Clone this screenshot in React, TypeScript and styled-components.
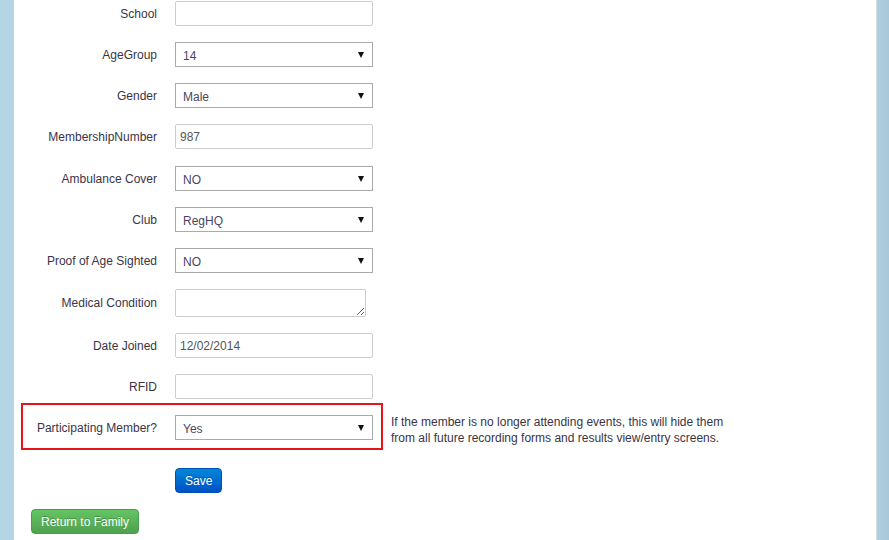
import styled, { createGlobalStyle } from "styled-components";

const GlobalStyle = createGlobalStyle`
  html, body {
    margin: 0;
    padding: 0;
    background: #b4d5e4;
  }
  body {
    font-family: Arial, "Liberation Sans", Helvetica, sans-serif;
    font-size: 12px;
    color: #333;
  }
  * { box-sizing: border-box; }
`;

type Field = {
  label: string;
  kind: "text" | "select" | "textarea";
  value?: string;
  gap?: number;
};

const fields: Field[] = [
  { label: "School", kind: "text" },
  { label: "AgeGroup", kind: "select", value: "14" },
  { label: "Gender", kind: "select", value: "Male" },
  { label: "MembershipNumber", kind: "text", value: "987", gap: 17 },
  { label: "Ambulance Cover", kind: "select", value: "NO" },
  { label: "Club", kind: "select", value: "RegHQ" },
  { label: "Proof of Age Sighted", kind: "select", value: "NO" },
  { label: "Medical Condition", kind: "textarea" },
  { label: "Date Joined", kind: "text", value: "12/02/2014" },
  { label: "RFID", kind: "text" },
];

const Control = ({ field }: { field: Field }) => {
  if (field.kind === "select") {
    return (
      <SelectWrap>
        <Select defaultValue={field.value}>
          <option>{field.value}</option>
        </Select>
      </SelectWrap>
    );
  }
  if (field.kind === "textarea") return <TextArea />;
  return <TextInput defaultValue={field.value ?? ""} />;
};

const App = () => {
  return (
    <>
      <GlobalStyle />
      <Page>
        <Panel>
          {fields.map((f) => (
            <Row key={f.label} $labelWidth={143} $gap={f.gap ?? 16}>
              <Label>{f.label}</Label>
              <Control field={f} />
            </Row>
          ))}

          <HighlightLine>
            <Highlight>
              <Row $labelWidth={134} $gap={0}>
                <Label>Participating Member?</Label>
                <Control field={{ label: "p", kind: "select", value: "Yes" }} />
              </Row>
            </Highlight>
            <Help>
              If the member is no longer attending events, this will hide them
              <br />
              from all future recording forms and results view/entry screens.
            </Help>
          </HighlightLine>

          <Actions>
            <Button $variant="primary">Save</Button>
          </Actions>
          <Footer>
            <Button $variant="success">Return to Family</Button>
          </Footer>
        </Panel>
        <RightEdge />
      </Page>
    </>
  );
};

const Page = styled.div`
  display: flex;
  min-height: 540px;
  padding-left: 14px;
  background: #b4d5e4;
`;

const Panel = styled.div`
  flex: 1;
  background: #fff;
  padding-top: 1px;
  min-height: 540px;
`;

const RightEdge = styled.div`
  width: 13px;
  border-left: 1px solid #d6dde0;
  background: linear-gradient(to right, #b0d0df, #a6c8d9);
`;

const Row = styled.div<{ $labelWidth: number; $gap: number }>`
  display: grid;
  grid-template-columns: ${(p) => p.$labelWidth}px 198px;
  column-gap: 18px;
  align-items: center;
  margin-bottom: ${(p) => p.$gap}px;
`;

const Label = styled.label`
  text-align: right;
  color: #3a3446;
  font-size: 12px;
`;

const TextInput = styled.input`
  width: 198px;
  height: 25px;
  border: 1px solid #ccc;
  border-radius: 2px;
  padding: 0 4px;
  font-family: inherit;
  font-size: 12px;
  color: #555;
  outline: none;
`;

const TextArea = styled.textarea`
  display: block;
  width: 191px;
  height: 28px;
  border: 1px solid #ccc;
  border-radius: 2px;
  font-family: inherit;
  font-size: 12px;
  outline: none;
`;

const SelectWrap = styled.div`
  position: relative;
  width: 198px;
  height: 25px;

  &::after {
    content: "";
    position: absolute;
    right: 9px;
    top: 10px;
    border-left: 3px solid transparent;
    border-right: 3px solid transparent;
    border-top: 6px solid #111;
    pointer-events: none;
  }
`;

const Select = styled.select`
  appearance: none;
  width: 100%;
  height: 100%;
  border: 1px solid #aaa;
  border-radius: 0;
  background: #fff;
  padding: 2px 0 0 7px;
  font-family: inherit;
  font-size: 12px;
  color: #4d4560;
  outline: none;
`;

const HighlightLine = styled.div`
  display: flex;
  align-items: flex-start;
  margin-top: -12px;
  margin-left: 7px;
`;

const Highlight = styled.div`
  width: 362px;
  border: 2px solid #e8141c;
  padding: 10px 0 8px;
`;

const Help = styled.p`
  margin: 11px 0 0 8px;
  line-height: 16px;
  font-size: 12px;
  color: #3a3446;
`;

const Actions = styled.div`
  padding: 18px 0 0 161px;
`;

const Footer = styled.div`
  padding: 16px 0 0 17px;
`;

const Button = styled.button<{ $variant: "primary" | "success" }>`
  height: 25px;
  padding: 0 9px;
  border-radius: 4px;
  font-family: inherit;
  font-size: 12px;
  color: #fff;
  text-shadow: 0 -1px 0 rgba(0, 0, 0, 0.25);
  cursor: pointer;
  border: 1px solid
    ${(p) => (p.$variant === "primary" ? "#0050b8" : "#4a9b4a")};
  background: ${(p) =>
    p.$variant === "primary"
      ? "linear-gradient(#0088d8, #0050c8)"
      : "linear-gradient(#64c464, #4ea24e)"};
`;

export default App;
